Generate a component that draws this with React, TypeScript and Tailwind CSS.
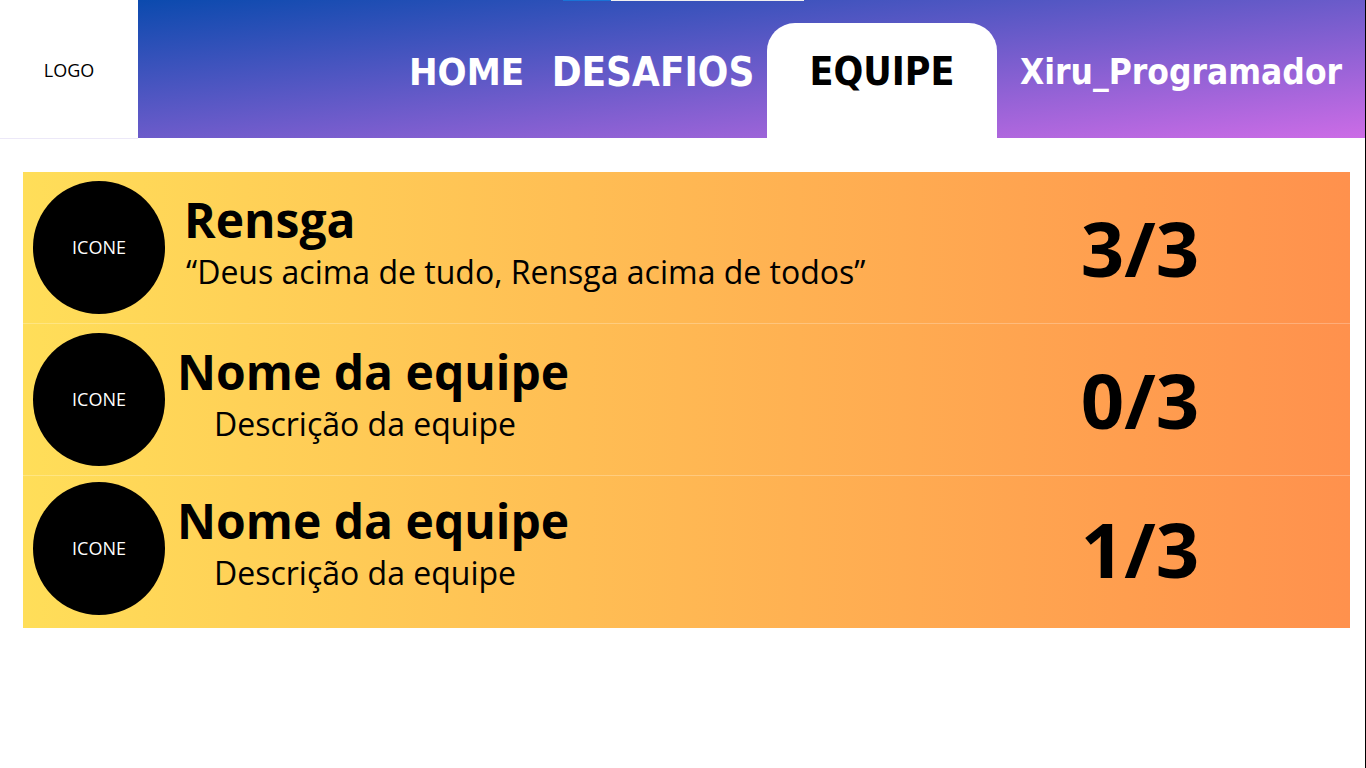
import React from "react";

interface ITeam {
  id: number;
  name: string;
  description: string;
  members: string;
  featured?: boolean;
}

const teams: ITeam[] = [
  { id: 1, name: "Rensga", description: "“Deus acima de tudo, Rensga acima de todos”", members: "3/3", featured: true },
  { id: 2, name: "Nome da equipe", description: "Descrição da equipe", members: "0/3" },
  { id: 3, name: "Nome da equipe", description: "Descrição da equipe", members: "1/3" },
];

const navFont = "font-['Comic_Sans_MS','DejaVu_Sans_Condensed','DejaVu_Sans',sans-serif] font-bold font-stretch-condensed";

export default function App() {
  return (
    <div className="relative min-h-screen w-full bg-white font-['Open_Sans',sans-serif] border-r border-black">
      {/* Header */}
      <header className="relative flex flex-row items-start w-full">
        <div className="w-[138px] h-[139px] shrink-0 flex items-center justify-center bg-white border-b border-[#ece8f8]">
          <span className="text-[18px] text-black mt-[2px]">LOGO</span>
        </div>

        <nav className="flex-1 h-[138px] flex flex-row items-end justify-end bg-[linear-gradient(to_bottom_right,#0b4aae,#cc6ce6)]">
          <a className={`w-[145px] h-[115px] flex justify-center pt-[28px] text-white text-[38px] leading-[42px] ${navFont}`}>
            HOME
          </a>
          <a className={`w-[228px] h-[115px] flex justify-center pt-[28px] text-white text-[40px] leading-[42px] ${navFont}`}>
            DESAFIOS
          </a>
          <a className={`w-[230px] h-[115px] flex justify-center pt-[28px] bg-white rounded-t-[28px] text-black text-[39px] leading-[42px] ${navFont}`}>
            EQUIPE
          </a>
          <a className={`w-[368px] h-[115px] flex justify-center pt-[28px] text-white text-[35px] leading-[42px] ${navFont}`}>
            Xiru_Programador
          </a>
        </nav>

        {/* thin loading strip on top */}
        <div className="absolute top-0 left-[563px] flex flex-row h-px">
          <div className="w-[48px] bg-[#1a73d6]"></div>
          <div className="w-[193px] bg-[#f0f0f0]"></div>
        </div>
      </header>

      {/* Teams list */}
      <div className="flex flex-col ml-[23px] mr-[15px] mt-[33px] bg-[linear-gradient(to_right,#ffde59,#ff914d)]">
        {teams.map((team, index) => {
          const isLast = index === teams.length - 1;

          return (
            <div
              key={team.id}
              className={`flex flex-row items-center h-[152px] ${isLast ? "pb-[7px]" : "border-b border-white/25"}`}
            >
              <div className="ml-[10px] w-[132px] h-[133px] shrink-0 rounded-full bg-black flex items-center justify-center">
                <span className="text-white text-[18px]">ICONE</span>
              </div>

              <div className={`flex flex-col flex-1 mb-[16px] text-black ${team.featured ? "ml-[19px]" : "ml-[12px]"}`}>
                <h2 className="text-[48px] font-bold leading-[64px]">{team.name}</h2>
                <p className={`text-[32px] leading-[40px] ${team.featured ? "ml-[2px]" : "ml-[37px]"}`}>
                  {team.description}
                </p>
              </div>

              <div className="w-[280px] mr-[70px] flex justify-center">
                <span className="text-[76px] font-bold leading-none text-black">{team.members}</span>
              </div>
            </div>
          );
        })}
      </div>
    </div>
  );
}
